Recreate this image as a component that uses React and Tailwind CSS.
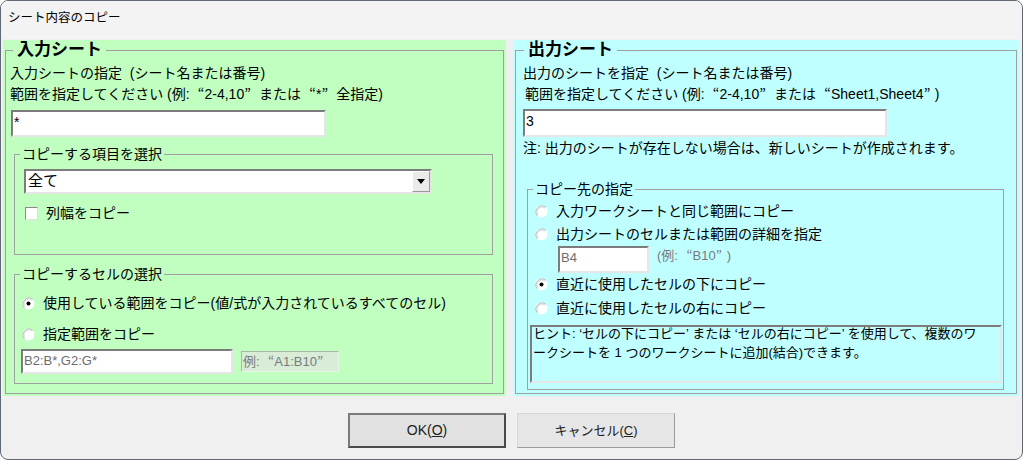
import React from "react";

const sunken =
  "border-2 border-t-[#7c7c7c] border-l-[#7c7c7c] border-r-[#e6e6e6] border-b-[#e6e6e6]";

function L() {
  return <span className="inline-block w-[11px] text-right font-['Noto_Sans_CJK_JP',sans-serif]">“</span>;
}
function R() {
  return <span className="inline-block w-[11px] text-left font-['Noto_Sans_CJK_JP',sans-serif]">”</span>;
}

function Radio({ checked }) {
  return (
    <svg width="13" height="13" viewBox="0 0 13 13" className="shrink-0">
      <circle cx="6.5" cy="6.5" r="6" fill="#fff" />
      <path d="M2.3 10.7 A6 6 0 0 1 10.7 2.3" fill="none" stroke="#b4b4b4" strokeWidth="1" />
      <path d="M3.2 9.8 A4.7 4.7 0 0 1 9.8 3.2" fill="none" stroke="#dcdcdc" strokeWidth="1" />
      {checked && <circle cx="6.5" cy="6.5" r="2" fill="#000" />}
    </svg>
  );
}

function RadioRow({ checked, children, className = "" }) {
  return (
    <div className={`flex items-center h-[20px] leading-[20px] ${className}`}>
      <Radio checked={checked} />
      <span className="ml-[8px] whitespace-nowrap">{children}</span>
    </div>
  );
}

export default function App() {
  return (
    <div className="w-[1025px] h-[460px] bg-white font-['Liberation_Sans','Noto_Sans_CJK_JP',sans-serif] text-black text-[14px]">
      <div className="w-[1023px] h-[460px] rounded-[8px] border border-[#5f6873] bg-[#f0f0f0] overflow-hidden">
        {/* Title bar */}
        <div className="h-[38px] bg-[#f3f3f3] pl-[7px] pt-[6px] text-[12.5px] leading-[20px] font-['Noto_Sans_CJK_JP',sans-serif]">
          シート内容のコピー
        </div>

        {/* Panels */}
        <div className="flex gap-[7px] pl-[2px] mt-[1px]">
          {/* Left panel */}
          <div className="w-[503px] h-[356px] bg-[#c0ffc0] px-[2px]">
            <fieldset className="h-[354px] border border-[#a0a0a0]">
              <legend className="ml-[7px] px-[4px] text-[17px] font-bold leading-[20px]">入力シート</legend>
              <div className="pl-[4px] pr-[4px]">
                <div className="mt-[3px] leading-[20px] whitespace-nowrap">入力シートの指定 &nbsp;(シート名または番号)</div>
                <div className="leading-[20px] whitespace-nowrap">
                  範囲を指定してください (例: <L />2-4,10<R /> または <L />*<R /> 全指定)
                </div>
                <div className={`ml-[1px] mt-[6px] w-[315px] h-[27px] bg-white ${sunken} leading-[20px] pl-[1px]`}>*</div>

                <fieldset className="mt-[7px] ml-[4px] w-[479px] h-[111px] border border-[#a0a0a0]">
                  <legend className="ml-[5px] px-[2px] leading-[20px]">コピーする項目を選択</legend>
                  <div className={`ml-[9px] mt-[5px] w-[408px] h-[25px] bg-white ${sunken} flex`}>
                    <div className="flex-1 text-[15px] leading-[20px] pl-[2px]">全て</div>
                    <div className="w-[18px] h-full bg-[#eaeaea] border border-t-[#ffffff] border-l-[#ffffff] border-r-[#9a9a9a] border-b-[#9a9a9a] flex items-center justify-center">
                      <svg width="8" height="5" viewBox="0 0 8 5">
                        <path d="M0 0 H8 L4 5 Z" fill="#000" />
                      </svg>
                    </div>
                  </div>
                  <div className="mt-[9px] ml-[10px] flex items-center h-[20px]">
                    <div className="w-[13px] h-[13px] bg-white border border-t-[#8a8a8a] border-l-[#8a8a8a] border-r-[#e0e0e0] border-b-[#e0e0e0]" />
                    <span className="ml-[8px] leading-[20px]">列幅をコピー</span>
                  </div>
                </fieldset>

                <fieldset className="mt-[9px] ml-[4px] w-[479px] h-[120px] border border-[#a0a0a0]">
                  <legend className="ml-[5px] px-[2px] leading-[20px]">コピーするセルの選択</legend>
                  <RadioRow checked className="mt-[9px] ml-[7px]">
                    使用している範囲をコピー(値/式が入力されているすべてのセル)
                  </RadioRow>
                  <RadioRow className="mt-[11px] ml-[7px]">指定範囲をコピー</RadioRow>
                  <div className="mt-[5px] ml-[6px] flex items-center">
                    <div className={`w-[212px] h-[25px] bg-white ${sunken} text-[#6d6d6d] text-[13px] leading-[20px] pl-[1px]`}>
                      B2:B*,G2:G*
                    </div>
                    <div className="ml-[8px] w-[98px] h-[21px] bg-[#d8ecd8] border border-[#e8f4e8] border-t-[#a8b8a8] border-l-[#a8b8a8] text-[#7a7a7a] text-[13px] leading-[18px] pl-[1px] whitespace-nowrap overflow-hidden">
                      例: <L />A1:B10<R />
                    </div>
                  </div>
                </fieldset>
              </div>
            </fieldset>
          </div>

          {/* Right panel */}
          <div className="w-[506px] h-[356px] bg-[#c0ffff] px-[2px]">
            <fieldset className="h-[354px] border border-[#a0a0a0]">
              <legend className="ml-[8px] px-[4px] text-[17px] font-bold leading-[20px]">出力シート</legend>
              <div className="pl-[7px]">
                <div className="mt-[3px] leading-[20px] whitespace-nowrap">出力のシートを指定 &nbsp;(シート名または番号)</div>
                <div className="leading-[20px] whitespace-nowrap pl-[2px]">
                  範囲を指定してください (例: <L />2-4,10<R /> または <L />Sheet1,Sheet4<R />)
                </div>
                <div className={`mt-[5px] w-[364px] h-[28px] bg-white ${sunken} leading-[20px] pl-[1px]`}>3</div>
                <div className="mt-[1px] leading-[20px] whitespace-nowrap">注: 出力のシートが存在しない場合は、新しいシートが作成されます。</div>

                <fieldset className="mt-[21px] ml-[4px] w-[477px] h-[211px] border border-[#a0a0a0]">
                  <legend className="ml-[5px] px-[2px] leading-[20px]">コピー先の指定</legend>
                  <RadioRow className="mt-[2px] ml-[7px]">入力ワークシートと同じ範囲にコピー</RadioRow>
                  <RadioRow className="mt-[3px] ml-[7px]">出力シートのセルまたは範囲の詳細を指定</RadioRow>
                  <div className="mt-[2px] ml-[30px] flex items-start">
                    <div className={`w-[91px] h-[27px] bg-white ${sunken} text-[#6d6d6d] text-[13px] leading-[20px] pl-[1px]`}>B4</div>
                    <div className="ml-[8px] text-[#7a7a7a] text-[13px] leading-[18px] whitespace-nowrap">
                      (例: <L />B10<R />)
                    </div>
                  </div>
                  <RadioRow checked className="mt-[1px] ml-[7px]">直近に使用したセルの下にコピー</RadioRow>
                  <RadioRow className="mt-[4px] ml-[7px]">直近に使用したセルの右にコピー</RadioRow>
                  <div className={`mt-[7px] ml-[2px] w-[472px] h-[58px] bg-[#c0ffff] ${sunken} text-[13px] overflow-hidden`}>
                    <div className="-mt-[3px] leading-[19px] pl-[1px]">
                      <div className="whitespace-nowrap">ヒント: ‘セルの下にコピー’ または ‘セルの右にコピー’ を使用して、複数のワ</div>
                      <div className="whitespace-nowrap">ークシートを 1 つのワークシートに追加(結合)できます。</div>
                    </div>
                  </div>
                </fieldset>
              </div>
            </fieldset>
          </div>
        </div>

        {/* Buttons */}
        <div className="flex justify-center gap-[11px] mt-[17px]">
          <div className="w-[158px] h-[35px] bg-[#e1e1e1] border-2 border-t-[#7a7a7a] border-l-[#7a7a7a] border-r-[#4a4a4a] border-b-[#4a4a4a] flex items-center justify-center text-[14px] text-[#222]">
            OK(<span className="underline">O</span>)
          </div>
          <div className="w-[158px] h-[35px] bg-[#e6e6e6] border border-t-[#d8d8d8] border-l-[#d8d8d8] border-r-[#9a9a9a] border-b-[#9a9a9a] flex items-center justify-center text-[13px] text-[#222]">
            キャンセル(<span className="underline">C</span>)
          </div>
        </div>
      </div>
    </div>
  );
}
